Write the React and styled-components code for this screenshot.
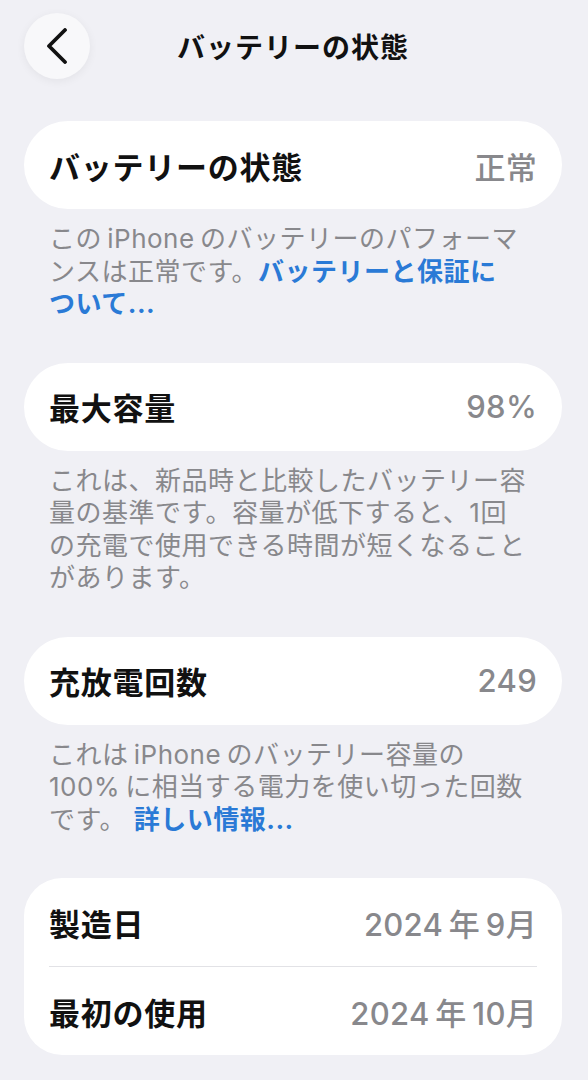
import React from 'react';
import styled, { createGlobalStyle } from 'styled-components';

const GlobalStyle = createGlobalStyle`
  html, body {
    margin: 0;
    padding: 0;
    background: #f0f0f5;
  }
  body {
    font-family: Inter, "Noto Sans CJK JP", "Noto Sans", sans-serif;
    -webkit-font-smoothing: antialiased;
  }
`;

const Page = styled.div`
  width: 588px;
  min-height: 1080px;
  box-sizing: border-box;
  padding: 13px 26px 0 24px;
  background: #f0f0f5;
`;

const Header = styled.header`
  display: grid;
  grid-template-columns: 66px 1fr 66px;
  align-items: center;
  height: 66px;
  margin-bottom: 42px;
`;

const BackButton = styled.button`
  all: unset;
  width: 66px;
  height: 66px;
  border-radius: 50%;
  background: #f8f8fa;
  box-shadow: 0 2px 10px rgba(0, 0, 0, 0.06);
  display: flex;
  align-items: center;
  justify-content: center;
  cursor: pointer;
`;

const Title = styled.h1`
  margin: 0;
  text-align: center;
  font-size: 28px;
  font-weight: 700;
  color: #111;
  letter-spacing: 1px;
`;

const Section = styled.section`
  margin-bottom: 42px;
`;

const Card = styled.div`
  background: #ffffff;
  border-radius: ${(p) => (p.$multi ? '38px' : '44px')};
  padding: 0 25px;
`;

const Row = styled.div`
  display: flex;
  align-items: center;
  justify-content: space-between;
  height: 88px;
  & + & {
    border-top: 1px solid #e2e2e6;
  }
`;

const Label = styled.span`
  font-size: 31px;
  font-weight: 700;
  color: #111;
  letter-spacing: 0.75px;
`;

const Value = styled.span`
  font-size: 31px;
  font-weight: 500;
  color: #88888c;
  letter-spacing: 0.3px;
`;

const Note = styled.p`
  margin: 14px 0 0;
  padding: 0 25px;
  font-size: 26px;
  line-height: 32.5px;
  color: #88888c;
  letter-spacing: 0.5px;
  white-space: nowrap;
`;

const Link = styled.a`
  color: #2a7ad6;
  font-weight: 700;
  text-decoration: none;
`;

function Chevron() {
  return (
    <svg width="22" height="36" viewBox="0 0 22 36" fill="none">
      <path
        d="M19 2 L3 18 L19 34"
        stroke="#111"
        strokeWidth="3.8"
        strokeLinecap="round"
        strokeLinejoin="round"
      />
    </svg>
  );
}

export default function App() {
  return (
    <Page>
      <GlobalStyle />
      <Header>
        <BackButton aria-label="戻る">
          <Chevron />
        </BackButton>
        <Title>バッテリーの状態</Title>
        <span />
      </Header>

      <Section>
        <Card>
          <Row>
            <Label>バッテリーの状態</Label>
            <Value>正常</Value>
          </Row>
        </Card>
        <Note>
          この{'\u2009'}iPhone{'\u2009'}のバッテリーのパフォーマ
          <br />
          ンスは正常です。<Link href="#">バッテリーと保証に<br />ついて...</Link>
        </Note>
      </Section>

      <Section>
        <Card>
          <Row>
            <Label>最大容量</Label>
            <Value>98%</Value>
          </Row>
        </Card>
        <Note>
          これは、新品時と比較したバッテリー容
          <br />
          量の基準です。容量が低下すると、1回
          <br />
          の充電で使用できる時間が短くなること
          <br />
          があります。
        </Note>
      </Section>

      <Section>
        <Card>
          <Row>
            <Label>充放電回数</Label>
            <Value>249</Value>
          </Row>
        </Card>
        <Note>
          これは{'\u2009'}iPhone{'\u2009'}のバッテリー容量の
          <br />
          100%{'\u2009'}に相当する電力を使い切った回数
          <br />
          です。 <Link href="#">詳しい情報...</Link>
        </Note>
      </Section>

      <Section>
        <Card $multi>
          <Row>
            <Label>製造日</Label>
            <Value>2024{'\u2009'}年{'\u2009'}9月</Value>
          </Row>
          <Row>
            <Label>最初の使用</Label>
            <Value>2024{'\u2009'}年{'\u2009'}10月</Value>
          </Row>
        </Card>
      </Section>
    </Page>
  );
}
